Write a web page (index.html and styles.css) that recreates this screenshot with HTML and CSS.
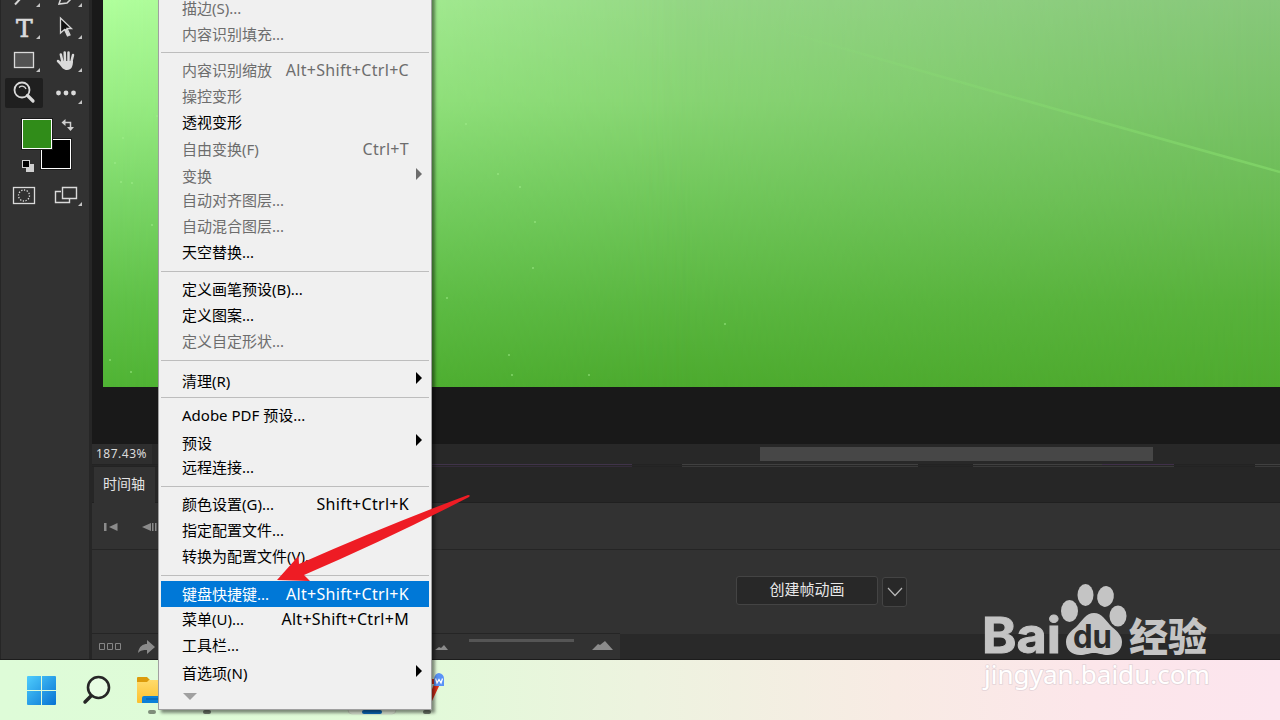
FILE: index.html
```html
<!DOCTYPE html>
<html lang="zh-CN">

<head>
    <meta charset="UTF-8">
    <meta name="viewport" content="width=device-width, initial-scale=1.0">
    <title>Photoshop</title>
    <link rel="stylesheet" href="styles.css">
</head>

<body>
    <div class="screen">
        <div class="app">
            <div class="toolbar">
                <div class="toolbar__grid">
                    <div class="tool"><svg width="38" height="30"><path d="M10 25.500L17 18" stroke="#d6d6d6" stroke-width="2" /><path class="corner" d="M35 24v4h-4z" /></svg></div>
                    <div class="tool"><svg width="38" height="30"><path d="M12 25l3-9 9-3 1 6-5 5z" fill="none" stroke="#d6d6d6" stroke-width="1.500" /><path class="corner" d="M35 24v4h-4z" /></svg></div>
                    <div class="tool"><span class="tool__type">T</span><svg width="38" height="30"><path class="corner" d="M35 23v4h-4z" /></svg></div>
                    <div class="tool"><svg width="38" height="30"><path d="M13.500 6v15l4-3.500 3 6.500 2.500-1-3-6.500h4.500z" fill="#111" stroke="#d6d6d6" stroke-width="1.300" /><path d="M18.500 17l3 6.500" stroke="#d6d6d6" stroke-width="2.500" /><path class="corner" d="M35 23v4h-4z" /></svg></div>
                    <div class="tool"><svg width="38" height="30"><rect x="9.500" y="7.500" width="19" height="15" fill="#535353" stroke="#dadada" stroke-width="1.300" /><path class="corner" d="M35 23v4h-4z" /></svg></div>
                    <div class="tool"><svg width="38" height="30"><g stroke="#dadada" stroke-width="2.500" stroke-linecap="round" fill="none"><path d="M15.500 17L13.800 9.500M18 16L17.700 7.500M21.500 16V7.500M24.300 17L26 10M15 20l-4-4" /></g><path d="M14 16h12c0 5-1.500 9-6 9-3.500 0-5-2-8-7z" fill="#dadada" /><path class="corner" d="M35 23v4h-4z" /></svg></div>
                    <div class="tool tool--active"><svg width="38" height="30"><circle cx="17" cy="12" r="7.500" fill="none" stroke="#dadada" stroke-width="1.800" /><path d="M14 9.500c3-2.500 6-1 7 1.500" fill="none" stroke="#dadada" stroke-width="1.300" /><path d="M22.500 17.500l5.500 5.500" stroke="#dadada" stroke-width="3.200" stroke-linecap="round" /></svg></div>
                    <div class="tool"><svg width="38" height="30"><g fill="#dadada"><circle cx="11.500" cy="15" r="2.400" /><circle cx="19" cy="15" r="2.400" /><circle cx="26.500" cy="15" r="2.400" /></g><path class="corner" d="M35 22v4h-4z" /></svg></div>
                </div>
                <svg class="toolbar__swatches" width="89" height="100" viewBox="0 110 89 100">
                    <rect x="40" y="138" width="32" height="32" fill="#1a1a1a" />
                    <rect x="41.500" y="139.500" width="29" height="29" fill="#000" stroke="#fff" />
                    <rect x="21" y="118" width="32" height="32" fill="#1a1a1a" />
                    <rect x="22.500" y="119.500" width="29" height="29" fill="#308c19" stroke="#fff" />
                    <path d="M64 122.500h6.500v6" fill="none" stroke="#d0d0d0" stroke-width="1.500" />
                    <path d="M61.500 122.500l4-3.500v7zM67 127h7l-3.500 4z" fill="#d0d0d0" />
                    <rect x="26" y="164" width="8" height="8" fill="#d0d0d0" />
                    <rect x="22.500" y="160.500" width="7" height="7" fill="#000" stroke="#d0d0d0" />
                    <rect x="13.500" y="187.500" width="21" height="16" fill="none" stroke="#dadada" stroke-width="1.300" />
                    <circle cx="24" cy="195.500" r="5.500" fill="none" stroke="#dadada" stroke-width="1.300" stroke-dasharray="1.300 1.500" />
                    <path d="M61 191.500h-5.500v11h14v-4M62.500 187.500h14v11h-14z" fill="none" stroke="#dadada" stroke-width="1.400" />
                    <path class="corner" d="M82 202v4h-4z" />
                </svg>
            </div>

            <div class="main">
                <div class="canvas">
                    <div class="canvas__image">
                        <svg width="1177" height="387" viewBox="103 0 1177 387">
                            <defs>
                                <linearGradient id="streak" gradientUnits="userSpaceOnUse" x1="760" y1="0" x2="1280" y2="0">
                                    <stop offset="0" stop-color="#8fe878" stop-opacity="0" />
                                    <stop offset="1" stop-color="#86dc6c" stop-opacity=".65" />
                                </linearGradient>
                            </defs>
                            <path d="M760 24Q960 83 1280 172" fill="none" stroke="url(#streak)" stroke-width="2.500" />
                            <g fill="#a5ef8e" opacity=".6">
                                <circle cx="123" cy="138" r="1" /><circle cx="115" cy="163" r="1" /><circle cx="121" cy="182" r="1" />
                                <circle cx="132" cy="183" r="1" /><circle cx="157" cy="116" r="1" /><circle cx="466" cy="124" r="1" />
                                <circle cx="498" cy="174" r="1" /><circle cx="520" cy="187" r="1" /><circle cx="535" cy="222" r="1" />
                                <circle cx="533" cy="268" r="1" /><circle cx="447" cy="298" r="1" /><circle cx="725" cy="324" r="1" />
                                <circle cx="509" cy="355" r="1" /><circle cx="512" cy="375" r="1" /><circle cx="589" cy="375" r="1" />
                                <circle cx="152" cy="225" r="1" /><circle cx="110" cy="360" r="1" /><circle cx="131" cy="372" r="1" />
                            </g>
                        </svg>
                    </div>
                </div>
                <div class="status">
                    <span class="status__zoom">187.43%</span>
                    <div class="status__scroll"></div>
                </div>
                <div class="seam"></div>
                <div class="timeline">
                    <div class="timeline__tabs">
                        <span class="timeline__tab">时间轴</span>
                    </div>
                    <div class="timeline__controls">
                        <svg width="66" height="16" viewBox="0 0 66 16" fill="#8b8b8b"><path d="M12 4h2.500v8H12zM25.500 4v8l-8.500-4zM59 4v8l-9-4zM60 4h1.500v8H60zM63 4h1.500v8H63z" /></svg>
                    </div>
                    <div class="timeline__body">
                        <button class="create">创建帧动画</button>
                        <button class="create-more"><svg width="16" height="10" viewBox="0 0 16 10"><path d="M1 1l7 7.500 7-7.500" fill="none" stroke="#b8b8b8" stroke-width="1.200" /></svg></button>
                    </div>
                    <div class="timeline__footer">
                        <div class="timeline__zoom">
                            <svg width="528" height="25" viewBox="92 634 528 25">
                                <path d="M99.500 643.500h5v6h-5zM107.500 643.500h5v6h-5zM115.500 643.500h5v6h-5z" fill="none" stroke="#858585" />
                                <path d="M138 653c1-7 5-9 9-9v-4l8 7-8 7v-4c-4 0-6 0-9 3z" fill="#8b8b8b" />
                                <path d="M435 650l4-3 2 1 3-3 4 5zM592 650l6-6 2 1 5-4 8 9z" fill="#8b8b8b" />
                                <path d="M469 639h105v3H469z" fill="#555" />
                            </svg>
                        </div>
                    </div>
                </div>
            </div>
        </div>

        <div class="taskbar">
            <svg width="460" height="60" viewBox="0 660 460 60">
                <defs>
                    <linearGradient id="win" gradientUnits="userSpaceOnUse" x1="27" y1="676" x2="56" y2="705">
                        <stop offset="0" stop-color="#4fcdfd" />
                        <stop offset="1" stop-color="#0673d3" />
                    </linearGradient>
                    <linearGradient id="folder" x1="0" y1="0" x2="0" y2="1">
                        <stop offset="0" stop-color="#ffdb6b" />
                        <stop offset="1" stop-color="#fcc02f" />
                    </linearGradient>
                </defs>
                <path d="M27 677q0-1 1-1h13v14H27zM42 676h13q1 0 1 1v13H42zM27 691h14v14H28q-1 0-1-1zM42 691h14v13q0 1-1 1H42z" fill="url(#win)" />
                <circle cx="98.500" cy="687.500" r="10.500" fill="#fff" fill-opacity=".3" stroke="#262626" stroke-width="2.600" />
                <path d="M91 696l-6 6" stroke="#262626" stroke-width="3.500" stroke-linecap="round" />
                <path d="M137 678q0-1 1-1h9l3 3h20v8h-33z" fill="#dc9b0c" />
                <path d="M137 682h10l2-2h20v23h-31q-1 0-1-1z" fill="url(#folder)" />
                <path d="M142 703v-5q0-2 2-2h20v7z" fill="#0c80d8" />
                <path d="M146 699h14" stroke="#075aa5" />
                <path d="M431 679l3 0v5l-3 0zM431 702l1-1 8-17h-6l-3 8z" fill="#e0301a" />
                <path d="M434 686v-7q1-6 5-6 5 1 5 6v7z" fill="#5992f7" />
                <path d="M435.500 678.500l1.500 4.500 2-3.500 2 3.500 1.500-4.500" fill="none" stroke="#fff" stroke-width="1.300" />
                <rect x="348" y="668" width="48" height="46" rx="4" fill="#edf8e4" stroke="#d3dfca" />
                <rect x="362" y="710" width="20" height="4" rx="2" fill="#0a6cbe" />
                <rect x="148" y="710" width="8" height="4" rx="2" fill="#7f8e7a" />
                <rect x="203" y="710" width="8" height="4" rx="2" fill="#727d6e" />
                <rect x="423" y="710" width="8" height="4" rx="2" fill="#727d6e" />
            </svg>
        </div>

        <div class="menu">
            <div class="item item--off"><span>描边(S)...</span></div>
            <div class="item item--off"><span>内容识别填充...</span></div>
            <div class="line"></div>
            <div class="item item--off"><span>内容识别缩放</span><span class="key">Alt+Shift+Ctrl+C</span></div>
            <div class="item item--off"><span>操控变形</span></div>
            <div class="item"><span>透视变形</span></div>
            <div class="item item--off item--tall"><span>自由变换(F)</span><span class="key">Ctrl+T</span></div>
            <div class="item item--off item--sub item--short"><span>变换</span></div>
            <div class="item item--off"><span>自动对齐图层...</span></div>
            <div class="item item--off"><span>自动混合图层...</span></div>
            <div class="item"><span>天空替换...</span></div>
            <div class="line line--mid"></div>
            <div class="item"><span>定义画笔预设(B)...</span></div>
            <div class="item"><span>定义图案...</span></div>
            <div class="item item--off"><span>定义自定形状...</span></div>
            <div class="line line--wide"></div>
            <div class="item item--sub"><span>清理(R)</span></div>
            <div class="line"></div>
            <div class="item"><span>Adobe PDF 预设...</span></div>
            <div class="item item--sub"><span>预设</span></div>
            <div class="item"><span>远程连接...</span></div>
            <div class="line line--mid"></div>
            <div class="item"><span>颜色设置(G)...</span><span class="key">Shift+Ctrl+K</span></div>
            <div class="item"><span>指定配置文件...</span></div>
            <div class="item"><span>转换为配置文件(V)...</span></div>
            <div class="line line--wide"></div>
            <div class="item item--hover"><span>键盘快捷键...</span><span class="key">Alt+Shift+Ctrl+K</span></div>
            <div class="item item--short"><span>菜单(U)...</span><span class="key">Alt+Shift+Ctrl+M</span></div>
            <div class="item item--tall"><span>工具栏...</span></div>
            <div class="item item--sub item--last"><span>首选项(N)</span></div>
            <div class="menu__more"></div>
        </div>

        <svg class="pointer" width="200" height="96" viewBox="274 490 200 96">
            <path d="M277 580L298.500 556 299 564Q385 526 468 495 471 495 469 497 390 538 304 575L310 581z" fill="#ee1c24" />
        </svg>

        <svg class="watermark" width="250" height="120" viewBox="970 576 250 120">
            <g fill="#c4c4c4">
                <text class="watermark__bai" x="982" y="653" textLength="79" lengthAdjust="spacingAndGlyphs">Bai</text>
                <ellipse cx="1069.500" cy="611" rx="8.500" ry="11" />
                <ellipse cx="1085.500" cy="595" rx="8" ry="11" />
                <ellipse cx="1105.500" cy="596.500" rx="8.300" ry="10.500" transform="rotate(10 1105.500 596.500)" />
                <ellipse cx="1118" cy="616" rx="8.500" ry="10.500" />
                <path d="M1094 613c8 0 12 8 18 14 6 5 10 9 10 15 0 9-7 13-14 13-6 0-9-2-14-2s-8 2-14 2c-8 0-14-5-14-13 0-7 5-11 10-15 6-6 10-14 18-14z" />
                <text class="watermark__cn" x="1129" y="651" textLength="78">经验</text>
            </g>
            <text class="watermark__du" x="1073" y="648" textLength="39" lengthAdjust="spacingAndGlyphs">du</text>
            <text class="watermark__url" x="984" y="684" textLength="226" lengthAdjust="spacingAndGlyphs">jingyan.baidu.com</text>
        </svg>
    </div>
</body>

</html>
```
FILE: styles.css
```css
* {
    margin: 0;
    padding: 0;
    box-sizing: border-box;
}

body {
    font-family: "Noto Sans", "Noto Sans CJK SC", sans-serif;
    overflow: hidden;
}

svg {
    display: block;
}

.screen {
    position: relative;
    width: 1280px;
    height: 720px;
    overflow: hidden;
}

.app {
    display: flex;
    height: 660px;
    background-color: #262626;
    border-bottom: 1px solid #1c1c1c;
}

/* tools */
.toolbar {
    width: 92px;
    overflow: hidden;
    background-color: #323232;
    border-left: 1px solid #262626;
    border-right: 3px solid #262626;
}

.toolbar__grid {
    display: grid;
    grid-template-columns: 38px 38px;
    gap: 3px 4px;
    margin-top: -21px;
    padding-left: 4px;
}

.tool {
    position: relative;
    height: 30px;
}

.tool--active {
    background-color: #1f1f1f;
    border-radius: 2px;
}

.tool__type {
    position: absolute;
    left: 11px;
    top: 0;
    font: 25px/33px "DejaVu Serif", serif;
    color: #dadada;
    -webkit-text-stroke: .7px #dadada;
}

.corner {
    fill: #c4c4c4;
}

.toolbar__swatches {
    margin: 2px 0 0 -1px;
}

/* document */
.main {
    flex: 1;
    display: flex;
    flex-direction: column;
}

.canvas {
    height: 444px;
    padding-left: 11px;
    background-color: #191919;
}

.canvas__image {
    position: relative;
    height: 387px;
    background: linear-gradient(#88c87b, #7ac369 26%, #6bbc54 52%, #58b23b 78%, #4fab2f);
}

.canvas__image::before,
.canvas__image::after {
    content: "";
    position: absolute;
    inset: 0;
}

.canvas__image::before {
    background: linear-gradient(#95d785, #88d573 26%, #70c75a 52%, #5bb741 78%, #4caa2e);
    mask-image: linear-gradient(90deg, #000 45%, transparent);
}

.canvas__image::after {
    background: linear-gradient(#b0ff9c, #98ed83 26%, #7ad566 52%, #60c148 78%, #50b334);
    mask-image: linear-gradient(90deg, #000, transparent 50%);
}

.canvas__image svg {
    position: relative;
    z-index: 1;
}

.status {
    display: flex;
    align-items: center;
    height: 20px;
    background-color: #282828;
}

.status__zoom {
    width: 60px;
    height: 20px;
    padding-left: 4px;
    font-size: 12px;
    line-height: 20px;
    letter-spacing: .5px;
    color: #dcdcdc;
    background-color: #2e2e2e;
}

.status__scroll {
    width: 393px;
    height: 14px;
    margin-left: 608px;
    background-color: #474747;
}

.seam {
    height: 3px;
    background: linear-gradient(90deg, #232323 300px, #40334a 300px 540px, #232323 540px 590px, #404040 590px 826px, #232323 826px 881px, #404040 881px 1010px, #40304a 1010px 1082px, #232323 1082px 1163px, #404040 1163px) no-repeat 0 0 / 100% 1px,
        linear-gradient(90deg, #232323 300px, #352b3b 300px 540px, #232323 540px 590px, #3a3a3a 590px 826px, #232323 826px 881px, #3a3a3a 881px 1082px, #232323 1082px 1163px, #3a3a3a 1163px) no-repeat 0 2px / 100% 1px;
}

/* timeline */
.timeline {
    flex: 1;
    display: flex;
    flex-direction: column;
    background-color: #323232;
}

.timeline__tabs {
    height: 36px;
    padding-left: 2px;
    background-color: #262626;
    border-bottom: 1px solid #202020;
}

.timeline__tab {
    display: block;
    width: 61px;
    height: 36px;
    padding-left: 9px;
    font-size: 14px;
    line-height: 34px;
    color: #e4e4e4;
    background-color: #323232;
}

.timeline__controls {
    display: flex;
    align-items: center;
    height: 47px;
    padding-top: 2px;
    border-bottom: 1px solid #252525;
}

.timeline__body {
    display: flex;
    height: 84px;
    padding: 26px 0 0 644px;
    gap: 4px;
}

.create,
.create-more {
    color: #e8e8e8;
    background-color: #282828;
    border: 1px solid #444;
    border-radius: 3px;
}

.create {
    width: 142px;
    height: 29px;
    padding-bottom: 4px;
    font: 15px/20px "Noto Sans CJK SC", sans-serif;
}

.create-more {
    display: flex;
    align-items: center;
    justify-content: center;
    width: 25px;
    height: 30px;
    margin-top: 1px;
}

.timeline__footer {
    height: 25px;
    background-color: #292929;
}

.timeline__zoom {
    width: 528px;
    background-color: #323232;
    box-shadow: 0 -1px #252525;
}

.taskbar {
    height: 60px;
    background: linear-gradient(90deg, #defcd8, #e0fbd8 30%, #edf3df 50%, #f8ebe4 70%, #fce6ea 85%, #fce5ee);
}

/* edit menu */
.menu {
    position: absolute;
    left: 158px;
    top: -7px;
    width: 274px;
    height: 717px;
    padding: 1px 2px;
    font-size: 15px;
    color: #000;
    background-color: #f0f0f0;
    border: 1px solid #a0a0a0;
    box-shadow: 3px 3px 3px rgba(0, 0, 0, .45);
}

.item {
    display: flex;
    align-items: center;
    justify-content: space-between;
    height: 26px;
    padding: 0 20px 0 21px;
    line-height: 26px;
    white-space: nowrap;
}

.key {
    font-size: 16px;
    letter-spacing: .3px;
}

.item--off {
    color: #6d6d6d;
}

.item--hover {
    color: #fff;
    background-color: #0078d7;
}

.item--tall {
    height: 27px;
}

.item--short {
    height: 25px;
}

.item--sub {
    padding: 3px 7px 0 21px;
}

.item--sub::after {
    content: "";
    margin-bottom: 5px;
    border: 6px solid transparent;
    border-left-color: currentColor;
    border-right: 0;
}

.item--hover + .item--short {
    height: 24px;
}

.item--last {
    height: 27px;
}

.line {
    height: 10px;
    padding-top: 5px;
    background: linear-gradient(#bdbdbd, #bdbdbd) no-repeat 0 5px / 100% 1px;
}

.line--mid {
    height: 11px;
    background-position-y: 6px;
}

.line--wide {
    height: 12px;
    background-position-y: 6px;
}

.menu__more {
    width: 14px;
    margin: 8px 0 0 22px;
    border: 7px solid transparent;
    border-top-color: #a0a0a0;
    border-bottom: 0;
}

.pointer {
    position: absolute;
    left: 274px;
    top: 490px;
}

/* logo over the corner of the screen */
.watermark {
    position: absolute;
    left: 970px;
    top: 576px;
}

.watermark__bai {
    font: bold 50px Inter, sans-serif;
    stroke: #c4c4c4;
    stroke-width: 1px;
}

.watermark__cn {
    font: 900 39px "Noto Sans CJK SC", sans-serif;
}

.watermark__du {
    font: bold 32px Inter, sans-serif;
    fill: #2c2c2c;
}

.watermark__url {
    font: 25px "Noto Sans", sans-serif;
    fill: #fff;
    stroke: #e4d4d8;
    stroke-width: 1.5px;
    paint-order: stroke;
}
```
